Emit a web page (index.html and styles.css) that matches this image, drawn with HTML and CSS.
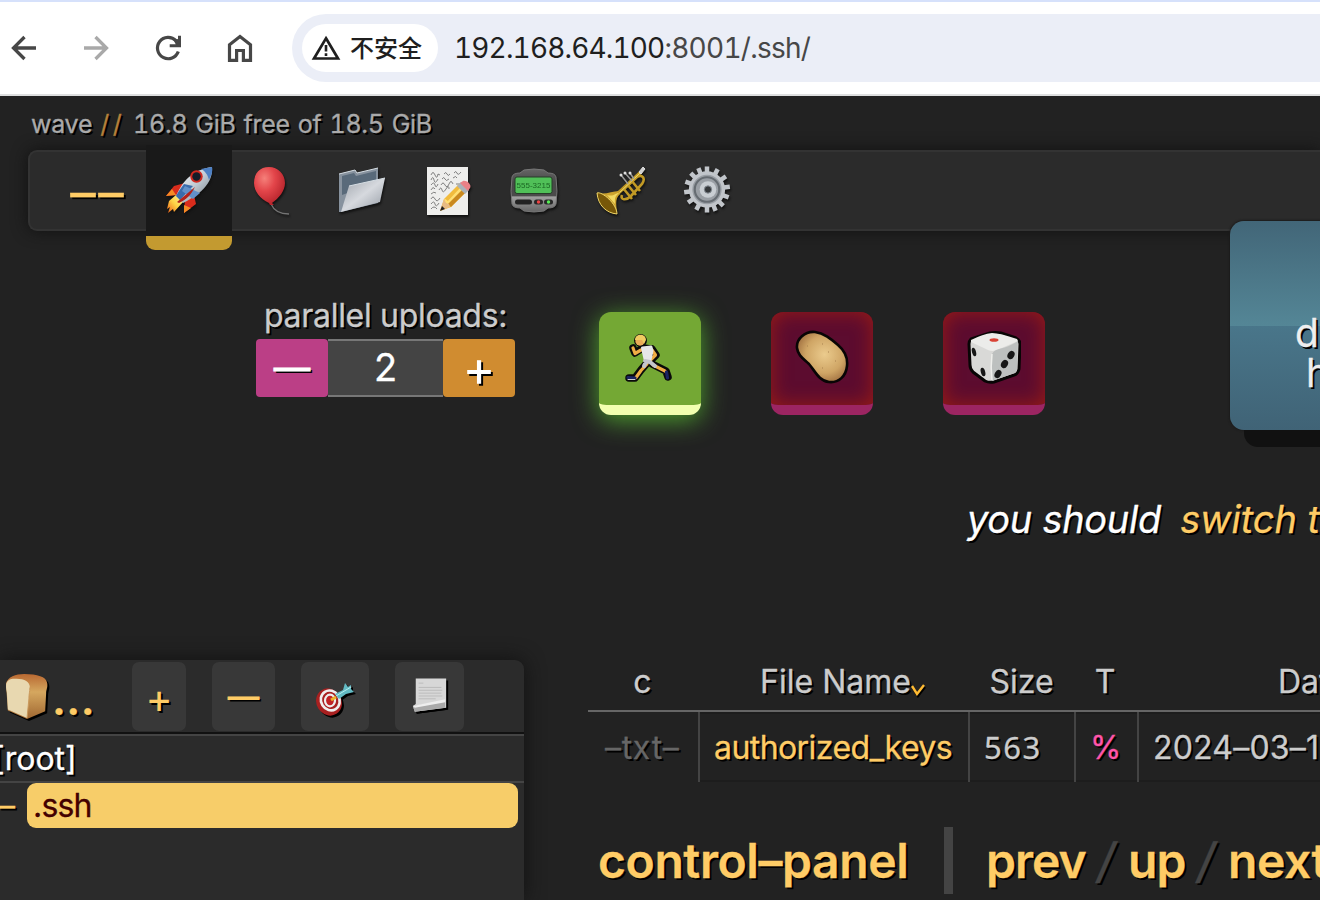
FILE: index.html
```html
<!DOCTYPE html>
<html lang="zh">
<head>
<meta charset="utf-8">
<title>192.168.64.100:8001/.ssh/</title>
<link rel="stylesheet" href="styles.css">
</head>
<body>
<header class="browser">
  <svg class="nav" viewBox="0 0 28 28"><path d="M26 14H4M14.500 3 3.500 14l11 11" fill="none" stroke="#474747" stroke-width="3.300"/></svg>
  <svg class="nav" viewBox="0 0 28 28"><path d="M2 14h22M13.500 3l11 11-11 11" fill="none" stroke="#a9a9a9" stroke-width="3.300"/></svg>
  <svg class="nav" viewBox="0 0 28 28"><path d="M24.300 17.500A10.700 10.700 0 1 1 22 6.700" fill="none" stroke="#474747" stroke-width="3.200"/><path d="M27 1.800v11.500H15.700v-3h6L19.500 6l4.500-1V1.800z" fill="#474747"/></svg>
  <svg class="nav" viewBox="0 0 28 28"><path d="M3.500 26.300V10.800L14 2.600l10.500 8.200v15.500h-7.100v-9.800h-6.800v9.800z" fill="none" stroke="#474747" stroke-width="3.200"/></svg>
  <div class="omnibox">
    <div class="chip">
      <svg class="warn" viewBox="0 0 30 28"><path d="M15 4.300 27 24.500H3z" fill="none" stroke="#1f1f1f" stroke-width="2.700"/><path d="M15 11v6.500M15 19.300v2.700" stroke="#1f1f1f" stroke-width="2.600"/></svg>
      <span>不安全</span>
    </div>
    <div class="url">192.168.64.100<span class="path">:8001/.ssh/</span></div>
  </div>
</header>

<div class="status">wave <span class="slashes">//</span> 16.8 GiB free of 18.5 GiB</div>

<nav class="tabs">
  <a class="tab collapse">––</a>
  <a class="tab active"><svg class="emoji" viewBox="0 0 50 50">
    <defs><linearGradient id="body" x1="0" y1="0" x2="1" y2="1"><stop offset="0" stop-color="#fff"/><stop offset=".5" stop-color="#c3ccd5"/><stop offset="1" stop-color="#6c7680"/></linearGradient><linearGradient id="flame" x1="1" y1="0" x2="0" y2="1"><stop offset="0" stop-color="#fff6a0"/><stop offset=".5" stop-color="#ffd445"/><stop offset="1" stop-color="#ed5b16"/></linearGradient></defs>
    <path d="M20 18 9 21 1 31l12-1zM29 30l2 9-12 9 1-13z" fill="#d92c1c"/><path d="M7 24 1 31l10-1zM19 40l0 8 7-5z" fill="#f58b24"/>
    <path d="M11 30 4 36l-2 8 3-2-2 6 5-4 1 3 9-10z" fill="url(#flame)"/>
    <path d="M11 31C19 13 29 5 47 2c1 13-7 25-29 36z" fill="url(#body)"/>
    <path d="M36 4 47 2c1 5-1 9-3 13-1-5-4-9-8-11z" fill="#4d80c4"/>
    <path d="M19 19c-3 4-6 8-8 12l4 4 13-14z" fill="#3b6cac"/><path d="m20 21 15 7-7 6-11-8z" fill="#6290c9"/>
    <path d="M30 22 12 37l2 1c8-4 12-8 16-16z" fill="#b3221b"/>
    <circle cx="31.500" cy="11.500" r="6.200" fill="#cf2920"/><circle cx="31.500" cy="11.500" r="4.200" fill="#141c28"/>
  </svg></a>
  <a class="tab"><svg class="emoji balloon" viewBox="0 0 50 50">
    <defs><radialGradient id="red" cx=".34" cy=".3" r=".75"><stop offset="0" stop-color="#f5807a"/><stop offset=".45" stop-color="#e3454a"/><stop offset="1" stop-color="#b3222a"/></radialGradient></defs>
    <path d="M24 38c3 7 9 10 18 10" fill="none" stroke="#747474" stroke-width="1.300"/><path d="M22 37c-9-4-15-12-15-20C7 7 13 1 22 1s16 7 16 16c0 8-6 15-13 20l2 2h-4z" fill="url(#red)"/>
  </svg></a>
  <a class="tab"><svg class="emoji" viewBox="0 0 50 50">
    <defs><linearGradient id="fold" x1="0" y1="0" x2="1" y2="1"><stop offset="0" stop-color="#9ba1a9"/><stop offset=".5" stop-color="#d6d9de"/><stop offset="1" stop-color="#9299a2"/></linearGradient></defs>
    <path d="M2 8 18 4l2 3 21-5v35L4 46H2z" fill="#87929e"/><path d="M5 10 17 7l2 3 20-5v12L5 29z" fill="#596a7a"/><path d="M12 20 48 12l-5 24L4 46z" fill="url(#fold)"/><path d="M2 8 18 4l2 3 21-5M12 20l36-8" fill="none" stroke="#d6dee4"/>
  </svg></a>
  <a class="tab"><svg class="emoji" viewBox="0 0 50 50">
    <path d="M4 1h41v48H4z" fill="#eeeeec"/><path d="M8 9q2-5 4 0t3-1l2 1m4-1q2-3 3 0t3 0m4-1q2-3 3 0t4-1M8 14q2-5 3 0t4-1m4 0q2-3 3 0t4 0m4-1q3-3 4 0M8 19q3-4 4 0t3-1m3 1q2-4 4 0t4-1 4 0m3 0h5M8 24q2-4 4-1m4 1q2-4 3 0t4-1 3 0M8 28q3-3 5-1M8 33q2-4 4 0t5-1M8 38q3-4 4 0t4-1M8 43q3-4 6 0" fill="none" stroke="#666" stroke-width=".8"/>
    <path d="m17 45 4-12 15-15 8 7-16 16z" fill="#f1bb3d"/><path d="m21 34 4 3 14-15" fill="none" stroke="#ffdf74" stroke-width="3"/><path d="m28 41 16-16-3-3-16 16z" fill="#c98920"/><path d="m17 45 4-12 2 4 3 1 1 3z" fill="#e7bb83"/><path d="m17 45 2-5 3 3z" fill="#222"/><path d="m34 20 4-4 8 8-4 4z" fill="#aab2b9"/><path d="m37 17 3-2c4-1 9 4 7 7l-2 3z" fill="#ea8187"/>
  </svg></a>
  <a class="tab"><svg class="emoji" viewBox="0 0 50 50">
    <defs><linearGradient id="pager" x1="0" y1="0" x2="0" y2="1"><stop offset="0" stop-color="#666"/><stop offset=".3" stop-color="#484848"/><stop offset=".62" stop-color="#4b4b4b"/><stop offset=".65" stop-color="#a0a0a0"/><stop offset="1" stop-color="#646464"/></linearGradient></defs>
    <path d="M15 4q10-2 20 0l4 3q7 0 8 4 2 15 0 27-1 4-8 4l-4 3q-10 2-20 0l-4-3q-7 0-8-4-2-12 0-27 1-4 8-4z" fill="url(#pager)" stroke="#777"/><rect x="6" y="11" width="37" height="16.500" rx="2" fill="#50c058" stroke="#263d28"/><text class="pager-text" x="24.500" y="22">555-3215</text><rect x="6" y="33.500" width="17" height="5" rx="2.500" fill="#222"/><rect x="25" y="33.500" width="9" height="5" rx="2.500" fill="#282828"/><rect x="35" y="33.500" width="9" height="5" rx="2.500" fill="#282828"/><circle cx="29.500" cy="36" r="1.700" fill="#e44"/><circle cx="39.500" cy="36" r="1.700" fill="#5e5"/>
  </svg></a>
  <a class="tab"><svg class="emoji" viewBox="0 0 50 50">
    <g fill="none" stroke="#c29a25"><path d="m18 31 27-25" stroke-width="3.500"/><path d="M26 29c-2 5 4 6 9 1l11-12c4-6 0-10-5-7L27 24" stroke-width="2.600"/><path d="m31 18 9 11M35 14l9 11M27 22l9 11" stroke-width="2.600"/></g>
    <path d="m20 30 25-24" fill="none" stroke="#f3dc6c"/><path d="M25 9l7 9m-3-11 7 8m-2-8 4 6" stroke="#999" stroke-width="1.500"/><g fill="#ddd"><circle cx="25" cy="9" r="1.500"/><circle cx="29" cy="7" r="1.500"/><circle cx="34" cy="7" r="1.500"/></g><path d="m43 6 4-5 2 2-4 5z" fill="#d1d1d1" stroke="#ddd"/>
    <path d="M1 27c9 2 15-2 22-2l1 3c-6 5-3 13-3 20C11 46 3 38 1 27z" fill="#cba22e"/><path d="M1 27c5-2 20 11 20 21C10 47 2 39 1 27z" fill="#775708" stroke="#efd568"/><path d="M11 29c7 2 8-2 12-2-5 4-4 6-4 11z" fill="#f1d862"/>
  </svg></a>
  <a class="tab"><svg class="emoji gear" viewBox="0 0 50 50">
    <g stroke="#c1c5ca" stroke-width="4.600"><path id="teeth" d="M25 1.500v47"/><path d="M25 1.500v47" transform="rotate(27.700 25 25)"/><path d="M25 1.500v47" transform="rotate(55.400 25 25)"/><path d="M25 1.500v47" transform="rotate(83 25 25)"/><path d="M25 1.500v47" transform="rotate(110 25 25)"/><path d="M25 1.500v47" transform="rotate(135 25 25)"/><path d="M25 1.500v47" transform="rotate(158 25 25)"/></g>
    <circle cx="25" cy="25" r="18.500" fill="#c1c5ca"/><circle cx="25" cy="25" r="15" fill="#9a9fa5"/><circle cx="25" cy="25" r="12.500" fill="none" stroke="#666c72" stroke-width="2.200"/><circle cx="26" cy="25" r="8.500" fill="#c9ced3"/><circle cx="26" cy="25" r="3.700" fill="#35383b" stroke="#838a91"/>
  </svg></a>
</nav>

<section class="upload">
  <div class="parallel">
    <label>parallel uploads:</label>
    <div class="stepper"><button class="less">—</button><output>2</output><button class="more">+</button></div>
  </div>
  <div class="options">
    <div class="option on"><svg class="opt-icon" viewBox="0 0 50 50">
      <g fill="none" stroke-linecap="round" stroke-linejoin="round">
        <path d="M15 7v1M16 16l-6 4-2-5M27 16l4 6-5 5M19 15l6 1-1 13M22 30l-6 7-6 8-6 0M27 31l14 7 2 6" stroke="#0a0a0a" stroke-width="7.500"/>
        <circle cx="15.500" cy="7.500" r="6.500" fill="#0a0a0a"/>
        <path d="M16 17l-6 3.500-2-5.500M27 17l3.500 5-5 5M22 31l-6 6.500-5 7M28 32l12 6" stroke="#efac45" stroke-width="3.200"/>
        <path d="M17.500 15l8.500-1 1 4-2 9-5-1z" fill="#e6e6e8" stroke="#e6e6e8" stroke-width="3"/>
        <path d="M20 28l5 1 5 4M21 29l-2 4" stroke="#c4c4cc" stroke-width="4"/>
        <path d="M3 44.500l7 .5M41.500 39l1 6" stroke="#1b2462" stroke-width="3.200"/><path d="M3 46.500h7" stroke="#ccc" stroke-width="1"/>
      </g><circle cx="15" cy="8" r="4.700" fill="#eaab57"/><path d="M10 7c0-7 11-7 11 0l-2 4-2-4z" fill="#f0cb61"/>
    </svg></div>
    <div class="option"><svg class="opt-icon big" viewBox="0 0 54 54">
      <defs><radialGradient id="potato" cx=".55" cy=".45" r=".62"><stop offset="0" stop-color="#ebcb8d"/><stop offset=".6" stop-color="#cfa565"/><stop offset="1" stop-color="#9b6a3c"/></radialGradient></defs><path d="M2 18C1 9 10 1 20 2 29 3 36 9 43 15 50 21 53 27 52 36 51 46 44 53 34 52 24 51 20 41 14 34 9 29 3 26 2 18z" fill="url(#potato)" stroke="#080505" stroke-width="2.600"/><path d="M12 16h1m14-2h1m12 17h1m-14 7h1m5-16h1" stroke="#a98250"/>
    </svg></div>
    <div class="option"><svg class="opt-icon big" viewBox="0 0 54 54">
      <path d="m4 9 19-6q5-1 11 0l15 5q4 2 4 6l-1 25q-1 5-5 6l-20 7q-5 1-9-1L6 42q-3-3-3-7L2 14q0-3 2-5z" fill="#d9d9d7" stroke="#080505" stroke-width="3"/><path d="M4 10q12-6 21-7 8 0 25 6l1 2-21 9q-5 2-9 0L4 12z" fill="#ececea"/><path d="M25 24q2-4 7-5 12-3 19-8l-1 28q0 4-5 5l-20 7z" fill="#bdc0bf"/><path d="M25 24c-1 8-1 18 0 26" stroke="#efefec" fill="none" stroke-width="1.500"/><ellipse cx="27" cy="10" rx="4.500" ry="1.800" fill="#d94235"/><g fill="#171717"><ellipse cx="7" cy="22" rx="2" ry="4.300" transform="rotate(-15 7 22)"/><ellipse cx="16" cy="42" rx="2.200" ry="4.300" transform="rotate(-15 16 42)"/><ellipse cx="44" cy="25" rx="3.300" ry="4.300" transform="rotate(30 44 25)"/><ellipse cx="37.500" cy="34" rx="3.300" ry="4.300" transform="rotate(30 37.500 34)"/><ellipse cx="31" cy="44" rx="3.200" ry="4.300" transform="rotate(30 31 44)"/></g>
    </svg></div>
  </div>
  <div class="dropzone"><span>d</span><span class="second">h</span></div>
</section>

<p class="notice">you should <a>switch t</a></p>

<main class="lower">
  <aside class="tree">
    <div class="tree-bar">
      <a class="crumb"><svg class="bread" viewBox="0 0 46 50"><defs><linearGradient id="crust" x1="0" y1="0" x2="0" y2="1"><stop offset="0" stop-color="#b96932"/><stop offset=".4" stop-color="#d5a75f"/><stop offset="1" stop-color="#a06731"/></linearGradient></defs><path d="M1 11C3 4 11 1 20 1c14 0 23 3 24 9 1 5-1 7-1 11l-1 19-19 8L3 39z" fill="url(#crust)"/><path d="M2 20C0 12 1 7 8 6c11-1 18 2 18 9 0 5-1 6-1 12l-2 20L3 38z" fill="#e8d8b0"/><path d="M26 15c0 5-1 6-1 12l-2 20" fill="none" stroke="#c8975a"/></svg><span>...</span></a>
      <button class="tool plus">+</button>
      <button class="tool minus">—</button>
      <button class="tool target"><svg class="tool-icon" viewBox="0 0 40 36"><ellipse cx="14" cy="20" rx="12.500" ry="14" transform="rotate(-32 14 20)" fill="#a82020"/><ellipse cx="15" cy="18.500" rx="9.200" ry="10.200" transform="rotate(-32 15 18)" fill="none" stroke="#f0eeee" stroke-width="2.600"/><ellipse cx="15" cy="18.500" rx="5" ry="5.800" fill="#c02225" stroke="#eee" stroke-width="2.200"/><path d="m16 18 5-3" stroke="#ecb22b" stroke-width="3"/><path d="m20 12 8-4 2-7 3 4 3-2v4l3 3-8 2-7 5z" fill="#63bac3"/><path d="m21 14 15-9" stroke="#b5eef0"/></svg></button>
      <button class="tool page"><svg class="tool-icon" viewBox="0 0 40 38"><path d="M5 1h32v31L4 36 2 30l3-2z" fill="#d7d7d7"/><path d="M8 6h5M8 10.500h24M8 13.500h25M8 16.500h24M8 19.500h25M8 22.500h18" stroke="#bbb"/><path d="m2 30 34-5v7L4 36z" fill="#aaa"/><path d="m2 30 34-7v3L4 32z" fill="#eee"/></svg></button>
    </div>
    <div class="root">[root]</div>
    <div class="node"><span class="twig">–</span><a>.ssh</a></div>
  </aside>
  <section class="files">
    <div class="row head"><span>c</span><span class="name">File Name<svg class="caret" viewBox="0 0 14 12"><path d="m1 2 5 8 7-9" fill="none" stroke="#fb3" stroke-width="2.400"/></svg></span><span>Size</span><span class="tags">T</span><span class="date">Date</span></div>
    <div class="row body"><span class="kind">–txt–</span><a class="file">authorized_keys</a><span class="size">563</span><span class="type">%</span><span class="when">2024–03–1</span></div>
    <footer class="foot"><a class="cp">control–panel</a><i class="bar"></i><a class="prev">prev</a><i class="slash">/</i><a class="up">up</a><i class="slash">/</i><a class="next">next</a></footer>
  </section>
</main>
</body>
</html>
```
FILE: styles.css
```css
* { box-sizing: border-box; }
html { overflow: hidden; }
body { margin: 0; width: 1320px; height: 900px; overflow: hidden; background: #222; color: #ccc; font-family: Inter, "Liberation Sans", "Noto Sans CJK SC", sans-serif; font-size: 32px; white-space: nowrap; text-shadow: 2px 2px 0 #000; -webkit-text-stroke: .3px currentColor; }
button { border: 0; padding: 0; font: inherit; text-shadow: inherit; }
svg { display: block; flex: none; }

.browser { height: 96px; border-top: 2px solid #d6e1fb; border-bottom: 2px solid #dedfe0; background: #fff; display: flex; align-items: center; padding-left: 10px; text-shadow: none; -webkit-text-stroke: 0; }
.nav { width: 28px; height: 28px; margin-right: 44px; }
.omnibox { flex: 1; min-width: 0; height: 68px; margin-left: -6px; border-radius: 34px 0 0 34px; background: #ebeef7; display: flex; align-items: center; padding-left: 10px; }
.chip { width: 136px; height: 48px; border-radius: 24px; background: #fff; display: flex; align-items: center; padding-left: 9px; gap: 9px; color: #1f1f1f; font: 500 24px/46px "Noto Sans CJK SC", sans-serif; }
.chip span { height: 48px; }
.warn { width: 30px; height: 28px; }
.url { margin-left: 16px; font-size: 28px; color: #1f1f1f; font-variant-numeric: tabular-nums; letter-spacing: -.85px; }
.path { color: #474747; letter-spacing: -.75px; }

.status { height: 54px; padding-left: 31px; font-size: 25px; line-height: 56px; color: #aaa; word-spacing: 1.500px; letter-spacing: -.27px; font-variant-numeric: tabular-nums; }
.slashes { color: #b5803a; letter-spacing: 3.500px; }

.tabs { height: 81px; margin-left: 28px; border: 2px solid #333; border-right: 0; border-radius: 9px 0 0 9px; background: #2b2b2b; box-shadow: 0 0 16px #111; display: flex; align-items: center; padding-left: 30px; }
.tab { width: 86.300px; height: 91px; flex: none; display: flex; align-items: center; justify-content: center; }
.collapse { color: #fc6; font-size: 51px; font-weight: 400; letter-spacing: 2.500px; padding: 3px 10px 0 0; }
.active { width: 86px; align-self: flex-start; margin-top: -7px; height: 105px; background: #191919; border-bottom: 14px solid #c39a30; border-radius: 0 0 9px 9px; padding: 0 0 2px 2px; }
.emoji { width: 50px; height: 50px; filter: drop-shadow(1px 2px 1px #111); }
.balloon { margin-left: -6px; }
.gear { height: 49px; margin-top: -2px; }
.pager-text { font: 400 8px "Liberation Sans", sans-serif; text-anchor: middle; fill: #1c6824; text-shadow: none; }

.upload { height: 267px; display: flex; align-items: flex-start; padding-left: 256px; }
.parallel { width: 259px; margin-top: 68px; }
.parallel label { display: block; height: 40px; padding-left: 8px; line-height: 33px; letter-spacing: -.3px; }
.stepper { display: flex; height: 58px; font-size: 38px; line-height: 58px; color: #fff; }
.stepper button { width: 72px; height: 58px; color: #fff; border-radius: 4px; -webkit-text-stroke-width: 1.2px; }
.stepper .less { background: #bb3f86; font-size: 36px; line-height: 52px; }
.stepper .more { background: #d08c30; font-size: 50px; line-height: 57px; -webkit-text-stroke-width: 0; }
.stepper output { width: 115px; background: #444; border: solid #777; border-width: 2px 0; text-align: center; line-height: 52px; text-shadow: none; }
.options { display: flex; gap: 70px; margin: 81px 0 0 84px; }
.option { width: 102px; height: 103px; border-radius: 12px; border-bottom: 10px solid #9c2562; background: #5c0c2f; box-shadow: inset 0 0 20px #9b1c14; display: flex; justify-content: center; }
.option.on { background: #74a834; border-color: #f2ffb0; box-shadow: 0 5px 26px #4fa32f; }
.opt-icon { width: 50px; height: 52px; margin-top: 20px; }
.opt-icon.big { width: 54px; height: 54px; margin-top: 18px; }
.dropzone { flex: 1; min-width: 0; height: 209px; margin: -10px 0 0 185px; border-radius: 14px 0 0 14px; background: linear-gradient(#426678, #548696 50%, #49768a 50%, #406376); box-shadow: 14px 17px 0 #111, 0 0 2px 1px #1b1b1b; padding: 92px 0 0 65px; color: #eee; font-size: 39px; line-height: 40px; display: flex; flex-direction: column; }
.second { padding-left: 11px; }

.notice { height: 41px; margin: 0 0 0 967px; font-size: 38px; line-height: 42px; font-style: italic; color: #fff; letter-spacing: -.3px; }
.notice a { color: #fc6; margin-left: 9px; letter-spacing: 0; }

.lower { display: flex; margin-top: 121px; height: 240px; }
.tree { width: 524px; flex: none; background: #2b2b2b; border-radius: 0 9px 0 0; box-shadow: 0 0 20px #111; }
.tree-bar { height: 74px; display: flex; align-items: flex-start; padding: 2px 0 0 5px; border-bottom: 2px solid #111; color: #fc6; }
.crumb { display: flex; align-items: flex-end; width: 127px; height: 62px; font-size: 44px; font-weight: 600; line-height: 50px; }
.bread { width: 44px; height: 50px; margin-bottom: 2px; filter: drop-shadow(2px 2px 0 #000); }
.crumb span { margin-left: 3px; letter-spacing: .3px; }
.tool { height: 69px; border-radius: 7px; background: #383838; color: #fc6; display: flex; align-items: center; justify-content: center; -webkit-text-stroke-width: .9px; }
.plus { width: 54px; margin-right: 26px; padding-top: 2px; font-size: 41px; -webkit-text-stroke-width: 0; }
.minus { width: 63px; margin-right: 26px; font-size: 31px; }
.target { width: 68px; margin-right: 26px; padding-top: 6px; }
.page { width: 69px; }
.tool-icon { width: 40px; height: 36px; filter: drop-shadow(2px 2px 0 #000); }
.page .tool-icon { margin-top: -3px; height: 37px; width: 38px; }
.root { height: 49px; border: solid #444; border-width: 2px 0; line-height: 46px; color: #fff; text-indent: -7px; }
.node { display: flex; height: 45px; line-height: 46px; color: #fc6; }
.twig { width: 27px; text-indent: -1px; }
.node a { width: 491px; border-radius: 9px; background: #f7cd69; color: #400; padding-left: 6px; text-shadow: none; letter-spacing: -.8px; }

.files { flex: 1; min-width: 0; margin: -10px 0 0 64px; }
.row { display: grid; grid-template-columns: 112px 270px 106px 63px 181px; }
.head { height: 62px; line-height: 63px; border-bottom: 2px solid #666; text-align: center; }
.head > * { margin-left: -3px; }
.head .tags { margin-left: -5px; }
.name { display: flex; justify-content: center; padding-left: 18px; }
.caret { width: 14px; height: 12px; margin-top: 34px; filter: drop-shadow(1px 2px 0 #000); }
.head .date { margin: 0; text-align: left; padding-left: 139px; overflow: hidden; }
.body { height: 70px; line-height: 71px; }
.body > * { height: 70px; border-right: 2px solid #444; padding-left: 14px; }
.body > :not(.kind) { box-shadow: inset 0 2px #1d1d1d, inset 0 -2px #1d1d1d; }
.body .kind { color: #666; padding-left: 17px; letter-spacing: .7px; }
.file { color: #fc6; letter-spacing: -.57px; }
.size { font-family: "Noto Sans", sans-serif; font-size: 31px; letter-spacing: 1.500px; }
.type { color: #f5a; }
.body .when { border-right: 0; letter-spacing: .2px; }
.foot { height: 67px; margin: 45px 0 0 10px; display: flex; align-items: center; font-size: 48px; font-weight: 600; line-height: 67px; letter-spacing: -.4px; color: #fc6; }
.cp { width: 346px; flex: none; }
.bar { width: 9px; flex: none; height: 67px; background: #444; margin-right: 33px; }
.prev { width: 98px; flex: none; letter-spacing: -1px; }
.up { width: 56px; flex: none; letter-spacing: -1px; }
.slash { flex: none; color: #444; font-weight: 500; text-align: center; width: 44px; }
```
